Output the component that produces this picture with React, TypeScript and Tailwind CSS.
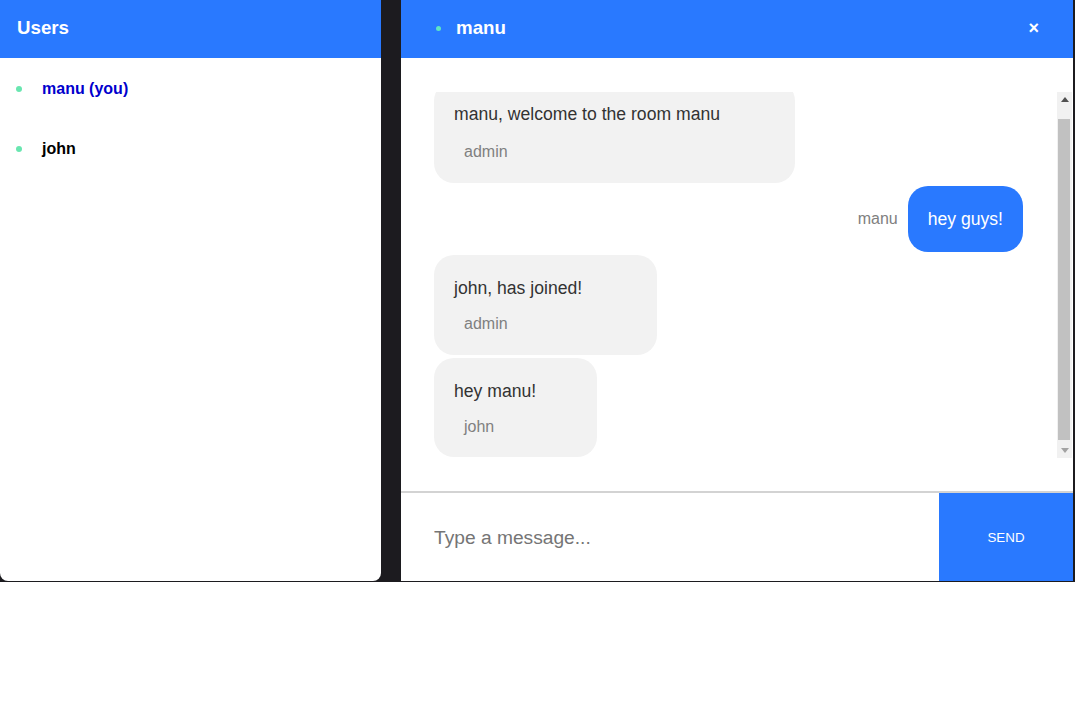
import { useLayoutEffect, useRef } from 'react';

const users = [
  { name: 'manu (you)', me: true },
  { name: 'john', me: false },
];

const messages = [
  { text: 'manu, welcome to the room manu', user: 'admin', mine: false, box: 'w-[361px] pb-[22px]', gap: 'mt-[19px]' },
  { text: 'hey guys!', user: 'manu', mine: true, box: '', gap: '' },
  { text: 'john, has joined!', user: 'admin', mine: false, box: 'w-[223px] pb-[22px]', gap: 'mt-[17px]' },
  { text: 'hey manu!', user: 'john', mine: false, box: 'w-[163px] pb-[21px]', gap: 'mt-[17px]' },
];

export default function App() {
  const scrollRef = useRef<HTMLDivElement>(null);

  // chat keeps the latest message in view
  useLayoutEffect(() => {
    if (scrollRef.current) scrollRef.current.scrollTop = scrollRef.current.scrollHeight;
  }, []);

  return (
    <div className="min-h-[711px] bg-white font-['Liberation_Sans',Arial,sans-serif]">
      <div className="h-[582px] bg-[#1c1b1f] flex gap-[20px] pb-px pr-[2px]">
        {/* Users sidebar */}
        <aside className="w-[381px] bg-white rounded-b-lg flex flex-col overflow-hidden">
          <div className="h-[58px] bg-[#2979ff] flex items-center pl-[17px] pb-[2px]">
            <h3 className="text-white font-bold text-[18.72px]">Users</h3>
          </div>
          <ul className="pt-px">
            {users.map((u) => (
              <li key={u.name} className="h-[60px] flex items-center pl-[16px]">
                <span className="w-[6px] h-[6px] rounded-full bg-[#69e6b0]" />
                <span className={`ml-[20px] font-bold text-[16px] ${u.me ? 'text-[#0000cd]' : 'text-black'}`}>
                  {u.name}
                </span>
              </li>
            ))}
          </ul>
        </aside>

        {/* Chat */}
        <section className="flex-1 bg-white flex flex-col">
          <div className="h-[58px] bg-[#2979ff] flex items-center pl-[35px] pr-[34px] pb-[2px]">
            <span className="w-[5px] h-[5px] rounded-full bg-[#5ee6c4]" />
            <h3 className="ml-[15px] text-white font-bold text-[18.72px]">manu</h3>
            <span className="ml-auto text-white font-bold text-[18px] leading-none">×</span>
          </div>

          <div className="flex-1 pt-[34px] pb-[33px] pl-[33px] pr-px min-h-0 flex">
            <div ref={scrollRef} className="flex-1 h-full overflow-hidden pr-[34px]">
              <div className="flex flex-col gap-[3px] pb-px">
                {messages.map((m, i) =>
                  m.mine ? (
                    <div key={i} className="flex items-center justify-end">
                      <span className="text-[16px] text-[#808080] mr-[10px]">{m.user}</span>
                      <div className="bg-[#2979ff] text-white rounded-[20px] px-5 pt-[23px] pb-[23px] text-[17.6px] leading-[20px]">
                        {m.text}
                      </div>
                    </div>
                  ) : (
                    <div key={i} className={`${m.box} bg-[#f2f2f2] rounded-[20px] pl-5 pt-[23px]`}>
                      <p className="text-[17.6px] leading-[20px] text-[#333]">{m.text}</p>
                      <p className={`${m.gap} pl-[10px] text-[16px] leading-[18px] text-[#808080]`}>{m.user}</p>
                    </div>
                  )
                )}
              </div>
            </div>

            {/* scrollbar */}
            <div className="w-[15px] bg-[#f1f1f1] flex flex-col">
              <div className="h-[15px] flex items-center justify-center">
                <svg width="8" height="5" viewBox="0 0 8 5">
                  <polygon points="0,5 4,0 8,5" fill="#505050" />
                </svg>
              </div>
              <div className="flex-1 pt-[12px] pb-[3px] pl-px pr-[2px] flex">
                <div className="flex-1 bg-[#c1c1c1]" />
              </div>
              <div className="h-[15px] flex items-center justify-center">
                <svg width="8" height="5" viewBox="0 0 8 5">
                  <polygon points="0,0 8,0 4,5" fill="#a3a3a3" />
                </svg>
              </div>
            </div>
          </div>

          <div className="border-t-2 border-[#d3d3d3] h-[90px] flex">
            <input
              placeholder="Type a message..."
              className="flex-1 pl-[33px] pt-[2px] text-[19.2px] text-[#333] placeholder:text-[#757575] outline-none"
            />
            <button className="w-[134px] bg-[#2979ff] text-white text-[13.33px] pt-[2px]">SEND</button>
          </div>
        </section>
      </div>
    </div>
  );
}
